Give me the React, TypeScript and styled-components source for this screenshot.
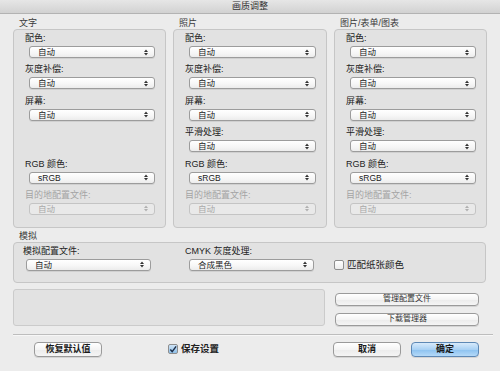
import React from "react";
import styled, { createGlobalStyle } from "styled-components";

const GlobalStyle = createGlobalStyle`
  html, body {
    margin: 0;
    padding: 0;
    background: #ececec;
  }
  * {
    box-sizing: border-box;
  }
`;

const Dialog = styled.div`
  width: 500px;
  height: 371px;
  overflow: hidden;
  background: #ececec;
  font-family: "Liberation Sans", "Noto Sans CJK SC", sans-serif;
  color: #222;
  font-size: 9px;
`;

const TitleBar = styled.div`
  height: 14px;
  background: linear-gradient(#e6e6e6, #d2d2d2);
  border-bottom: 1px solid #b3b3b3;
  display: flex;
  align-items: center;
  justify-content: center;
  font-size: 9px;
  line-height: 11px;
  color: #333;
`;

const Body = styled.div`
  padding: 0 14px 0 13px;
`;

const Columns = styled.div`
  display: grid;
  grid-template-columns: 153px 154px 153px;
  column-gap: 7px;
`;

const SectionHead = styled.div<{ $h: number; $indent?: number }>`
  height: ${(p) => p.$h}px;
  display: flex;
  align-items: flex-end;
  padding-left: ${(p) => p.$indent ?? 6}px;
  font-size: 9px;
  line-height: 11px;
  color: #3a3a3a;
`;

const Panel = styled.div`
  background: #e2e2e2;
  border: 1px solid #c6c6c6;
  border-radius: 4px;
  padding: 0 10px 12px 11px;
`;

const FieldLabel = styled.div<{ $h: number; $muted?: boolean }>`
  height: ${(p) => p.$h}px;
  display: flex;
  align-items: flex-end;
  padding-bottom: 2px;
  line-height: 11px;
  font-size: 9px;
  color: ${(p) => (p.$muted ? "#a4a4a4" : "#222")};
`;

const Spacer = styled.div<{ $h: number }>`
  height: ${(p) => p.$h}px;
`;

const SelectBox = styled.div<{ $w: number; $inset: number; $disabled?: boolean }>`
  width: ${(p) => p.$w}px;
  margin-left: ${(p) => p.$inset}px;
  height: 12px;
  border: 1px solid ${(p) => (p.$disabled ? "#c4c4c4" : "#9c9c9c")};
  border-radius: 3px;
  background: ${(p) =>
    p.$disabled ? "#e9e9e9" : "linear-gradient(#ffffff, #f6f6f6 60%, #ececec)"};
  box-shadow: ${(p) => (p.$disabled ? "none" : "0 1px 0 rgba(0,0,0,0.08)")};
  display: flex;
  align-items: center;
  justify-content: space-between;
  padding: 0 6px 0 8px;
  font-size: 8.5px;
  line-height: 10px;
  color: ${(p) => (p.$disabled ? "#a8a8a8" : "#222")};
`;

const Arrows = styled.svg<{ $disabled?: boolean }>`
  width: 4px;
  height: 7px;
  fill: ${(p) => (p.$disabled ? "#b0b0b0" : "#333")};
`;

const SimPanel = styled(Panel)`
  display: flex;
  align-items: flex-end;
  padding: 0 9px 11px 9px;
`;

const SimField = styled.div<{ $w: number }>`
  width: ${(p) => p.$w}px;
  flex: none;
`;

const CheckRow = styled.label<{ $bold?: boolean }>`
  display: flex;
  align-items: center;
  gap: 3px;
  height: 12px;
  font-size: 9.5px;
  line-height: 12px;
  font-weight: ${(p) => (p.$bold ? 600 : 400)};
  color: #222;
`;

const Box = styled.span<{ $checked?: boolean }>`
  width: 10px;
  height: 10px;
  border: 1px solid #8e8e8e;
  border-radius: 2px;
  background: ${(p) =>
    p.$checked ? "linear-gradient(#cfe4f7, #8ebfe8)" : "linear-gradient(#fff, #ececec)"};
  display: flex;
  align-items: center;
  justify-content: center;
`;

const LowerRow = styled.div`
  display: flex;
  gap: 10px;
  margin-top: 6px;
`;

const EmptyWell = styled.div`
  width: 312px;
  height: 37px;
  background: #e2e2e2;
  border: 1px solid #cbcbcb;
  border-radius: 3px;
`;

const SideButtons = styled.div`
  display: flex;
  flex-direction: column;
  gap: 7px;
  padding-top: 4px;
`;

const Button = styled.button<{
  $w: number;
  $h: number;
  $primary?: boolean;
  $size?: number;
  $light?: boolean;
}>`
  width: ${(p) => p.$w}px;
  height: ${(p) => p.$h}px;
  padding: 0;
  border: 1px solid ${(p) => (p.$primary ? "#5d88b5" : "#9a9a9a")};
  border-radius: 4px;
  background: ${(p) =>
    p.$primary
      ? "linear-gradient(#d7eafb, #a9d1f4 50%, #8bc1ef 51%, #b4d9f8)"
      : "linear-gradient(#ffffff, #f4f4f4 50%, #ebebeb 51%, #f5f5f5)"};
  box-shadow: 0 1px 0 rgba(0, 0, 0, 0.1);
  font-family: inherit;
  font-size: ${(p) => p.$size ?? 9}px;
  font-weight: ${(p) => (p.$light ? 400 : 600)};
  line-height: 10px;
  color: ${(p) => (p.$light ? "#333" : "#1a1a1a")};
`;

const Separator = styled.div`
  margin: 8px -7px 0 0;
  height: 1px;
  background: #bdbdbd;
  box-shadow: 0 1px 0 #f7f7f7;
`;

const Footer = styled.div`
  display: flex;
  align-items: center;
  margin-top: 7px;
  padding: 0 7px 0 21px;
`;

const SaveCheck = styled(CheckRow)`
  margin-left: 66px;
`;

const RightGroup = styled.div`
  margin-left: auto;
  display: flex;
  gap: 10px;
`;

const Updown = ({ disabled }: { disabled?: boolean }) => (
  <Arrows viewBox="0 0 4 7" $disabled={disabled}>
    <path d="M0 3 L2 0.5 L4 3 Z" />
    <path d="M0 4 L2 6.5 L4 4 Z" />
  </Arrows>
);

const Select = ({
  value,
  w,
  inset,
  disabled,
}: {
  value: string;
  w: number;
  inset: number;
  disabled?: boolean;
}) => (
  <SelectBox $w={w} $inset={inset} $disabled={disabled}>
    <span>{value}</span>
    <Updown disabled={disabled} />
  </SelectBox>
);

const Tick = () => (
  <svg width="9" height="9" viewBox="0 0 9 9">
    <path d="M1.5 4.5 L3.6 7 L8 1" stroke="#1b2c45" strokeWidth="1.6" fill="none" />
  </svg>
);

type Col = { title: string; smoothing: boolean; w: number };

const cols: Col[] = [
  { title: "文字", smoothing: false, w: 126 },
  { title: "照片", smoothing: true, w: 127 },
  { title: "图片/表单/图表", smoothing: true, w: 126 },
];

const ROW = 19.4;

function Column({ col }: { col: Col }) {
  return (
    <div>
      <SectionHead $h={15}>{col.title}</SectionHead>
      <Panel>
        <FieldLabel $h={16}>配色:</FieldLabel>
        <Select value="自动" w={col.w} inset={4} />
        <FieldLabel $h={ROW}>灰度补偿:</FieldLabel>
        <Select value="自动" w={col.w} inset={4} />
        <FieldLabel $h={ROW}>屏幕:</FieldLabel>
        <Select value="自动" w={col.w} inset={4} />
        {col.smoothing ? (
          <>
            <FieldLabel $h={ROW}>平滑处理:</FieldLabel>
            <Select value="自动" w={col.w} inset={4} />
          </>
        ) : (
          <Spacer $h={ROW + 12} />
        )}
        <FieldLabel $h={ROW}>RGB 颜色:</FieldLabel>
        <Select value="sRGB" w={col.w} inset={4} />
        <FieldLabel $h={ROW} $muted>
          目的地配置文件:
        </FieldLabel>
        <Select value="自动" w={col.w} inset={4} disabled />
      </Panel>
    </div>
  );
}

export default function App() {
  return (
    <Dialog>
      <GlobalStyle />
      <TitleBar>画质调整</TitleBar>
      <Body>
        <Columns>
          {cols.map((c) => (
            <Column key={c.title} col={c} />
          ))}
        </Columns>

        <SectionHead $h={14}>模拟</SectionHead>
        <SimPanel>
          <SimField $w={162}>
            <FieldLabel $h={16}>模拟配置文件:</FieldLabel>
            <Select value="自动" w={125} inset={3} />
          </SimField>
          <SimField $w={149}>
            <FieldLabel $h={16}>CMYK 灰度处理:</FieldLabel>
            <Select value="合成黑色" w={125} inset={4} />
          </SimField>
          <CheckRow>
            <Box />
            匹配纸张颜色
          </CheckRow>
        </SimPanel>

        <LowerRow>
          <EmptyWell />
          <SideButtons>
            <Button $w={144} $h={13} $size={8} $light>
              管理配置文件
            </Button>
            <Button $w={144} $h={13} $size={8} $light>
              下载管理器
            </Button>
          </SideButtons>
        </LowerRow>

        <Separator />

        <Footer>
          <Button $w={68} $h={15}>
            恢复默认值
          </Button>
          <SaveCheck $bold>
            <Box $checked>
              <Tick />
            </Box>
            保存设置
          </SaveCheck>
          <RightGroup>
            <Button $w={68} $h={15}>
              取消
            </Button>
            <Button $w={68} $h={15} $primary>
              确定
            </Button>
          </RightGroup>
        </Footer>
      </Body>
    </Dialog>
  );
}
